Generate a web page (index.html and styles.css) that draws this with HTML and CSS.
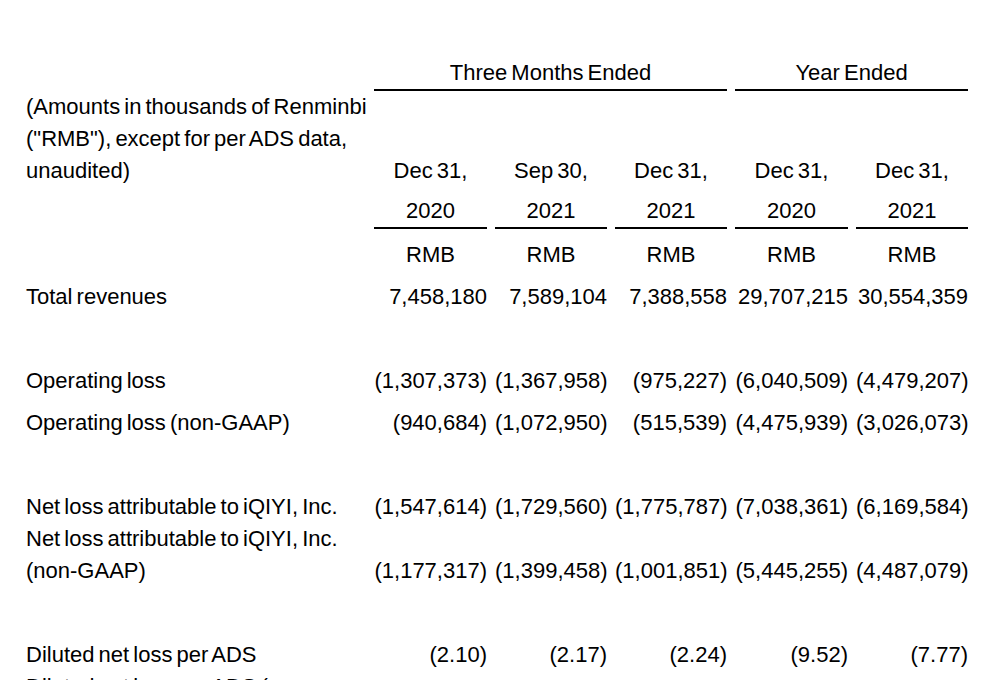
FILE: index.html
```html
<!DOCTYPE html>
<html lang="en">
<head>
<meta charset="utf-8">
<title>iQIYI financial highlights</title>
<link rel="stylesheet" href="styles.css">
</head>
<body>
<table class="fin">
  <colgroup>
    <col class="c-label">
    <col class="c-a">
    <col class="c-b">
    <col class="c-b">
    <col class="c-a">
    <col class="c-b">
  </colgroup>
  <tbody>
    <tr class="tight">
      <td class="label"></td>
      <td class="center ruled" colspan="3">Three Months Ended</td>
      <td class="center ruled" colspan="2">Year Ended</td>
    </tr>
    <tr class="tight">
      <td class="label">(Amounts in thousands of Renminbi<br>("RMB"), except for per ADS data,<br>unaudited)</td>
      <td class="center">Dec 31,</td>
      <td class="center">Sep 30,</td>
      <td class="center">Dec 31,</td>
      <td class="center">Dec 31,</td>
      <td class="center">Dec 31,</td>
    </tr>
    <tr class="year">
      <td class="label"></td>
      <td class="center ruled">2020</td>
      <td class="center ruled">2021</td>
      <td class="center ruled">2021</td>
      <td class="center ruled">2020</td>
      <td class="center ruled">2021</td>
    </tr>
    <tr>
      <td class="label"></td>
      <td class="center">RMB</td>
      <td class="center">RMB</td>
      <td class="center">RMB</td>
      <td class="center">RMB</td>
      <td class="center">RMB</td>
    </tr>
    <tr>
      <td class="label">Total revenues</td>
      <td class="num">7,458,180</td>
      <td class="num">7,589,104</td>
      <td class="num">7,388,558</td>
      <td class="num">29,707,215</td>
      <td class="num">30,554,359</td>
    </tr>
    <tr class="blank"><td class="label">&nbsp;</td><td></td><td></td><td></td><td></td><td></td></tr>
    <tr>
      <td class="label">Operating loss</td>
      <td class="num">(1,307,373)</td>
      <td class="num">(1,367,958)</td>
      <td class="num">(975,227)</td>
      <td class="num">(6,040,509)</td>
      <td class="num">(4,479,207)</td>
    </tr>
    <tr>
      <td class="label">Operating loss (non-GAAP)</td>
      <td class="num">(940,684)</td>
      <td class="num">(1,072,950)</td>
      <td class="num">(515,539)</td>
      <td class="num">(4,475,939)</td>
      <td class="num">(3,026,073)</td>
    </tr>
    <tr class="blank"><td class="label">&nbsp;</td><td></td><td></td><td></td><td></td><td></td></tr>
    <tr>
      <td class="label">Net loss attributable to iQIYI, Inc.</td>
      <td class="num">(1,547,614)</td>
      <td class="num">(1,729,560)</td>
      <td class="num">(1,775,787)</td>
      <td class="num">(7,038,361)</td>
      <td class="num">(6,169,584)</td>
    </tr>
    <tr class="tight">
      <td class="label">Net loss attributable to iQIYI, Inc.<br>(non-GAAP)</td>
      <td class="num">(1,177,317)</td>
      <td class="num">(1,399,458)</td>
      <td class="num">(1,001,851)</td>
      <td class="num">(5,445,255)</td>
      <td class="num">(4,487,079)</td>
    </tr>
    <tr class="blank"><td class="label">&nbsp;</td><td></td><td></td><td></td><td></td><td></td></tr>
    <tr>
      <td class="label">Diluted net loss per ADS</td>
      <td class="num">(2.10)</td>
      <td class="num">(2.17)</td>
      <td class="num">(2.24)</td>
      <td class="num">(9.52)</td>
      <td class="num">(7.77)</td>
    </tr>
    <tr class="tight">
      <td class="label">Diluted net loss per ADS (<br>non-GAAP)</td>
      <td class="num">(1.61)</td>
      <td class="num">(1.76)</td>
      <td class="num">(1.26)</td>
      <td class="num">(7.36)</td>
      <td class="num">(5.65)</td>
    </tr>
  </tbody>
</table>
</body>
</html>
```
FILE: styles.css
```css
html, body {
  margin: 0;
  padding: 0;
  background: #ffffff;
}

body {
  color: #000000;
  font-family: "Liberation Sans", Arial, sans-serif;
  font-size: 22px;
  line-height: 32px;
  word-spacing: -2px;
}

.fin {
  table-layout: fixed;
  border-collapse: separate;
  border-spacing: 8px 0;
  margin: 57px 0 0 18px;
  width: 958px;
}

.c-label { width: 340px; }
.c-a { width: 113px; }
.c-b { width: 112px; }

.fin td {
  padding: 10px 0 0 0;
  vertical-align: bottom;
  white-space: nowrap;
}

.fin tr.tight td {
  padding-top: 0;
}

.fin tr.year td {
  padding-top: 8px;
}

.label {
  text-align: left;
}

.center {
  text-align: center;
}

.num {
  text-align: right;
}

.ruled {
  border-bottom: 2px solid #000000;
}
```
